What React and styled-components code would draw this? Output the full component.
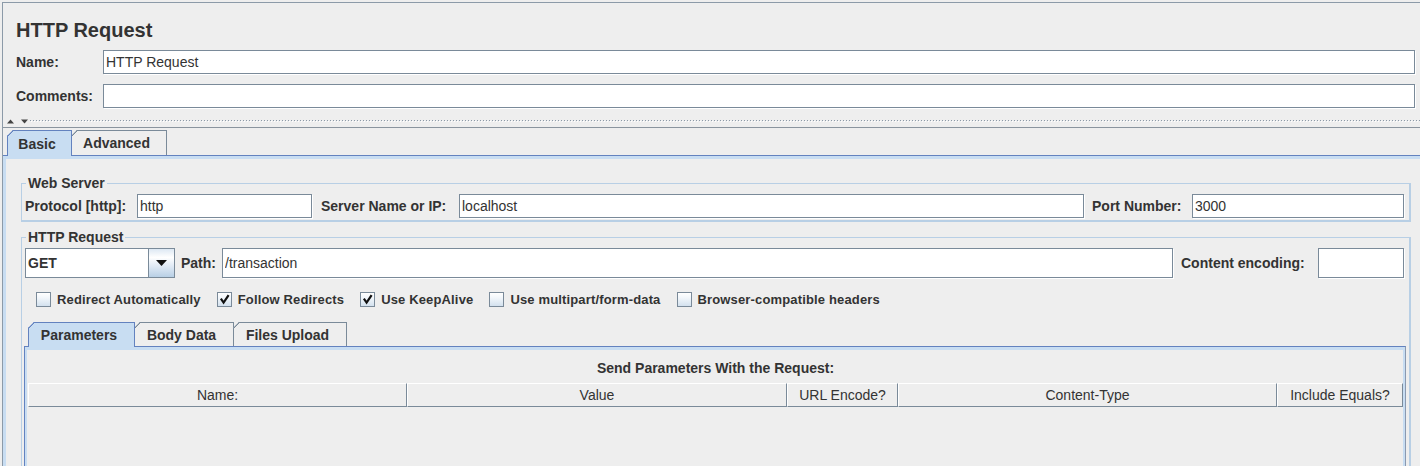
import React from 'react';
import styled, { createGlobalStyle } from 'styled-components';

const GlobalStyle = createGlobalStyle`
  html, body {
    margin: 0;
    padding: 0;
    background: #eeeeee;
    overflow: hidden;
  }
  body {
    font-family: 'Liberation Sans', Arial, sans-serif;
    color: #333333;
  }
  * {
    box-sizing: border-box;
  }
`;

const Frame = styled.div`
  margin: 2px 0 0 2px;
  height: 464px;
  border-left: 1px solid #8c9aa8;
  border-top: 1px solid #8c9aa8;
  overflow: hidden;
`;

const Header = styled.div`
  padding: 15px 5px 0 13px;
`;

const Title = styled.h1`
  margin: 0;
  height: 24px;
  line-height: 24px;
  font-size: 20px;
  font-weight: bold;
  color: #333333;
`;

const Row = styled.div`
  display: flex;
  align-items: center;
  margin-top: ${p => p.$mt || 0}px;
`;

const Label = styled.label`
  flex: none;
  width: ${p => p.$w}px;
  margin-left: ${p => p.$ml || 0}px;
  font-size: 14px;
  font-weight: bold;
  color: #333333;
  white-space: nowrap;
`;

const Field = styled.input`
  flex: ${p => (p.$w ? 'none' : '1')};
  width: ${p => (p.$w ? `${p.$w}px` : 'auto')};
  min-width: 0;
  height: ${p => p.$h || 24}px;
  margin: 0;
  padding: 0 2px;
  background: #ffffff;
  border: 1px solid #7a8a99;
  box-shadow: 1px 1px 0 #ffffff;
  border-radius: 0;
  outline: none;
  font-family: 'Liberation Sans', Arial, sans-serif;
  font-size: 14px;
  color: #333333;
`;

const Divider = styled.div`
  height: 20px;
  padding: 11px 0 0 4px;
  border-bottom: 1px solid #8a949e;
  display: flex;
  align-items: flex-start;
`;

const Bumps = styled.div`
  flex: 1;
  height: 2px;
  margin: 1px 0 0 1px;
  background-image:
    linear-gradient(90deg, #8c9aa8 1px, transparent 1px),
    linear-gradient(90deg, transparent 1px, #ffffff 1px, #ffffff 2px, transparent 2px);
  background-size: 3px 1px, 3px 1px;
  background-position: 0 0, 0 1px;
  background-repeat: repeat-x;
`;

const TabRow = styled.div`
  display: flex;
  align-items: flex-end;
  height: ${p => p.$h}px;
  padding-left: 4px;
`;

const Tab = styled.div`
  position: relative;
  flex: none;
  width: ${p => p.$w}px;
  height: ${p => (p.$active ? p.$h + 1 : p.$h)}px;
  margin-bottom: ${p => (p.$active ? -1 : 0)}px;
  margin-left: ${p => (p.$first ? 0 : -1)}px;
  z-index: ${p => (p.$active ? 1 : 0)};
  padding-right: 5px;
  display: flex;
  align-items: center;
  justify-content: center;
  font-size: 14px;
  font-weight: bold;
  color: #333333;
  background: ${p => (p.$active ? '#c8ddf2' : '#eeeeee')};
  border: 1px solid ${p => (p.$active ? '#6382bf' : '#7a8a99')};
  border-bottom: none;
  clip-path: polygon(6px 0, 100% 0, 100% 100%, 0 100%, 0 6px);

  &::before {
    content: '';
    position: absolute;
    left: -1px;
    top: -1px;
    width: 8px;
    height: 8px;
    background: linear-gradient(
      to bottom right,
      transparent 4.2px,
      ${p => (p.$active ? '#6382bf' : '#7a8a99')} 4.2px,
      ${p => (p.$active ? '#6382bf' : '#7a8a99')} 5.4px,
      transparent 5.4px
    );
  }
`;

const TabContent = styled.div`
  height: 320px;
  border-top: 1px solid #6382bf;
  box-shadow: inset 3px 3px 0 #c8ddf2;
  padding: 19px 9px 0 18px;
`;

const Group = styled.fieldset`
  margin: ${p => p.$mt || 0}px 0 0 0;
  padding: 3px 5px 2px 3px;
  min-width: 0;
  border-style: solid;
  border-color: #b8cfe5;
  border-width: 1px 2px 2px 1px;
`;

const GroupTitle = styled.legend`
  margin-left: 1px;
  padding: 0 2px;
  font-size: 14px;
  font-weight: bold;
  line-height: 16px;
  color: #333333;
`;

const Combo = styled.div`
  flex: none;
  width: 150px;
  height: 30px;
  display: flex;
  background: #ffffff;
  border: 1px solid #7a8a99;
`;

const ComboValue = styled.div`
  flex: 1;
  padding-left: 2px;
  font-size: 14px;
  font-weight: bold;
  line-height: 28px;
  color: #333333;
`;

const ComboButton = styled.div`
  width: 26px;
  border-left: 1px solid #7a8a99;
  background: linear-gradient(180deg, #dde8f3 0%, #ffffff 30%, #e6eef7 55%, #b8cfe5 100%);
  display: flex;
  align-items: center;
  justify-content: center;
`;

const Checks = styled.div`
  display: flex;
  align-items: center;
  gap: 16px;
  height: 21px;
  margin-top: 11px;
  padding-left: 11px;
`;

const Check = styled.label`
  display: flex;
  align-items: center;
  gap: 6px;
  font-size: 13px;
  font-weight: bold;
  letter-spacing: 0.15px;
  color: #333333;
  white-space: nowrap;
`;

const Box = styled.span`
  width: 15px;
  height: 15px;
  border: 1px solid #7a8a99;
  background: linear-gradient(180deg, #ffffff 0%, #f3f7fb 35%, #d3e1ee 100%);
  display: flex;
  align-items: center;
  justify-content: center;
`;

const InnerTabs = styled.div`
  margin: 12px -2px 0 -1px;
`;

const InnerPanel = styled.div`
  min-height: 200px;
  border-top: 1px solid #6382bf;
  border-left: 1px solid #6382bf;
  border-right: 1px solid #8a99b0;
  box-shadow: inset 2px 3px 0 #c8ddf2, inset -2px 0 0 #c8ddf2;
  padding: 0 2px 0 3px;
`;

const PanelTitle = styled.div`
  margin-top: 11px;
  height: 20px;
  line-height: 20px;
  text-align: center;
  font-size: 14px;
  font-weight: bold;
  color: #333333;
`;

const HeaderRow = styled.div`
  display: grid;
  grid-template-columns: 379px 380px 111px 379px 1fr;
  margin-top: 5px;
`;

const HeaderCell = styled.div`
  height: 24px;
  border-top: 1px solid #ffffff;
  border-left: 1px solid #ffffff;
  border-right: 1px solid #7a8a99;
  border-bottom: 1px solid #7a8a99;
  text-align: center;
  line-height: 22px;
  font-size: 14px;
  color: #333333;
  white-space: nowrap;
  overflow: hidden;
`;

const CheckMark = () => (
  <svg width="11" height="11" viewBox="0 0 11 11">
    <path d="M2.5 5.5 L4.6 8.6 L9 2" fill="none" stroke="#111" strokeWidth="2.2" strokeLinecap="square" />
  </svg>
);

const options = [
  { label: 'Redirect Automatically', checked: false },
  { label: 'Follow Redirects', checked: true },
  { label: 'Use KeepAlive', checked: true },
  { label: 'Use multipart/form-data', checked: false },
  { label: 'Browser-compatible headers', checked: false },
];

const columns = ['Name:', 'Value', 'URL Encode?', 'Content-Type', 'Include Equals?'];

export default function App() {
  return (
    <>
      <GlobalStyle />
      <Frame>
        <Header>
          <Title>HTTP Request</Title>
          <Row $mt={8}>
            <Label $w={87}>Name:</Label>
            <Field readOnly value="HTTP Request" />
          </Row>
          <Row $mt={10}>
            <Label $w={87}>Comments:</Label>
            <Field readOnly value="" />
          </Row>
        </Header>

        <Divider>
          <svg width="22" height="5" viewBox="0 0 22 5">
            <path d="M0 4.5 L3.5 0.5 L7 4.5 Z" fill="#444" />
            <path d="M14 0.5 L21 0.5 L17.5 4.5 Z" fill="#444" />
          </svg>
          <Bumps />
        </Divider>

        <TabRow $h={27}>
          <Tab $first $active $w={65} $h={25}>Basic</Tab>
          <Tab $w={96} $h={25}>Advanced</Tab>
        </TabRow>

        <TabContent>
          <Group>
            <GroupTitle>Web Server</GroupTitle>
            <Row>
              <Label $w={112}>Protocol [http]:</Label>
              <Field $w={175} readOnly value="http" />
              <Label $w={138} $ml={9}>Server Name or IP:</Label>
              <Field readOnly value="localhost" />
              <Label $w={100} $ml={8}>Port Number:</Label>
              <Field $w={212} readOnly value="3000" />
            </Row>
          </Group>

          <Group $mt={7}>
            <GroupTitle>HTTP Request</GroupTitle>
            <Row>
              <Combo>
                <ComboValue>GET</ComboValue>
                <ComboButton>
                  <svg width="11" height="6" viewBox="0 0 11 6">
                    <path d="M0 0 L11 0 L5.5 6 Z" fill="#111" />
                  </svg>
                </ComboButton>
              </Combo>
              <Label $w={41} $ml={6}>Path:</Label>
              <Field $h={30} readOnly value="/transaction" />
              <Label $w={137} $ml={8}>Content encoding:</Label>
              <Field $w={86} $h={30} readOnly value="" />
            </Row>

            <Checks>
              {options.map(o => (
                <Check key={o.label}>
                  <Box>{o.checked && <CheckMark />}</Box>
                  {o.label}
                </Check>
              ))}
            </Checks>

            <InnerTabs>
              <TabRow $h={24}>
                <Tab $first $active $w={107} $h={24}>Parameters</Tab>
                <Tab $w={100} $h={24}>Body Data</Tab>
                <Tab $w={114} $h={24}>Files Upload</Tab>
              </TabRow>
              <InnerPanel>
                <PanelTitle>Send Parameters With the Request:</PanelTitle>
                <HeaderRow>
                  {columns.map(c => (
                    <HeaderCell key={c}>{c}</HeaderCell>
                  ))}
                </HeaderRow>
              </InnerPanel>
            </InnerTabs>
          </Group>
        </TabContent>
      </Frame>
    </>
  );
}
